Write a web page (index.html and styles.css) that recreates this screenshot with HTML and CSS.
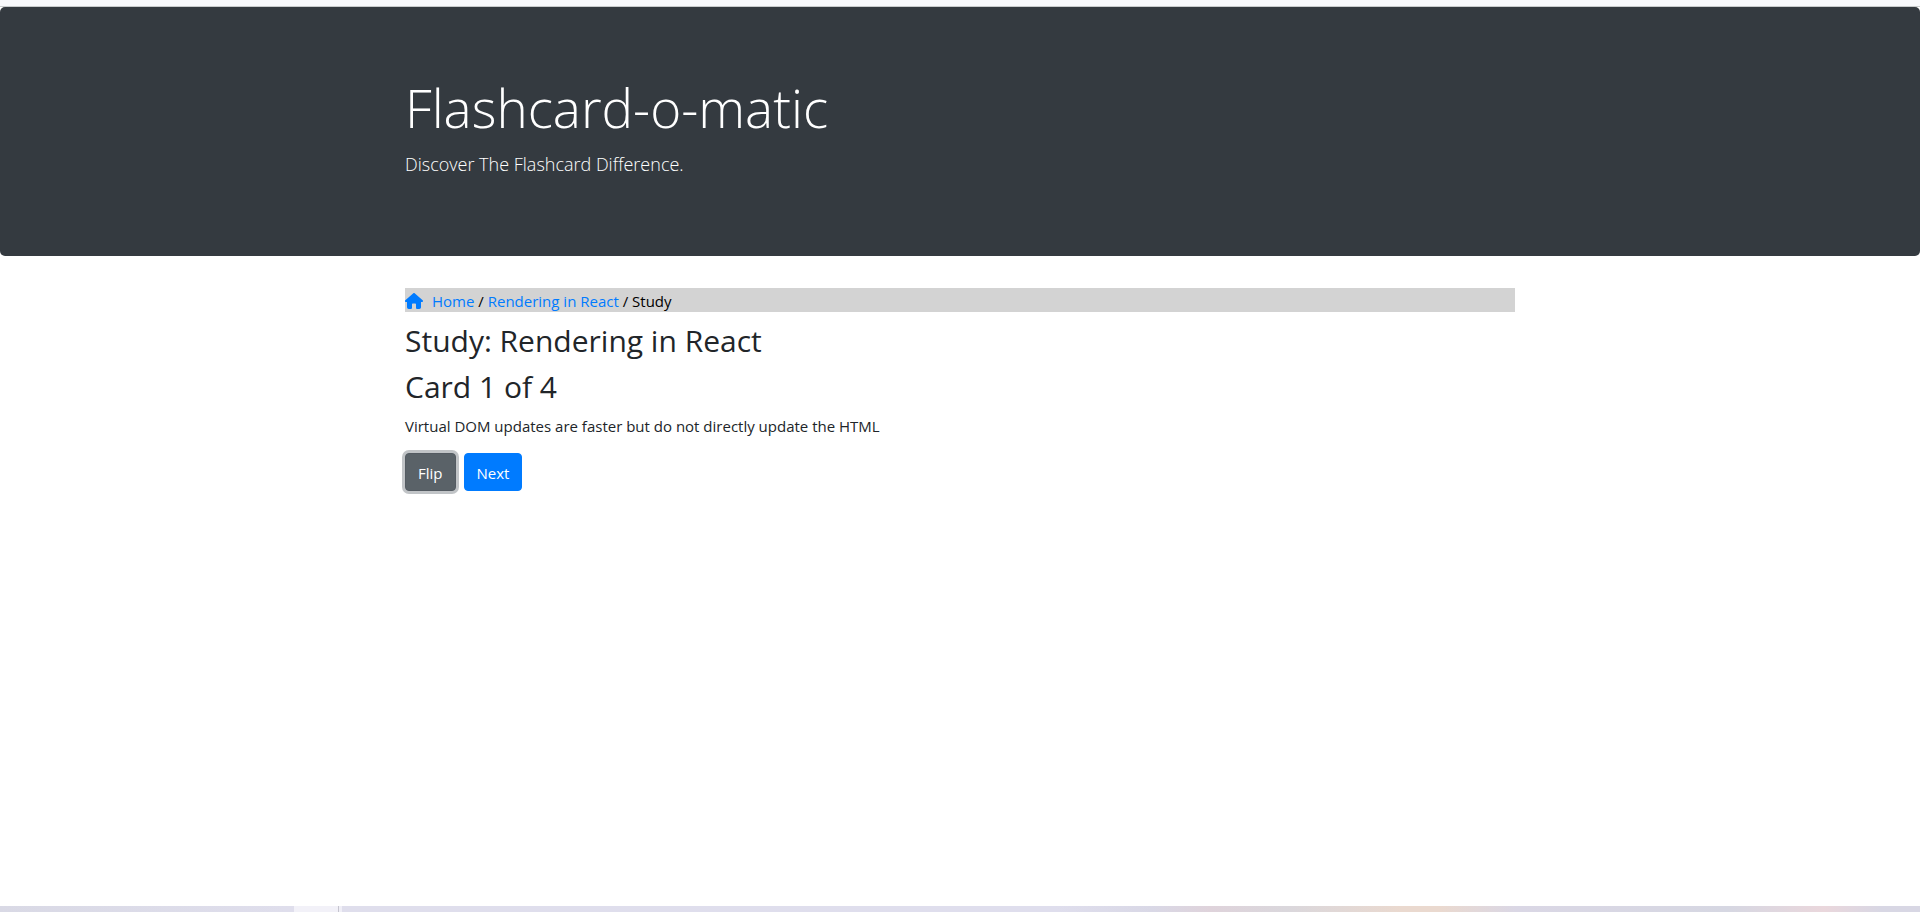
FILE: index.html
```html
<!DOCTYPE html>
<html lang="en">
<head>
<meta charset="utf-8">
<meta name="viewport" content="width=device-width, initial-scale=1">
<title>Flashcard-o-matic</title>
<link rel="stylesheet" href="styles.css">
</head>
<body>
<div class="top-strip"></div>
<header class="jumbotron">
  <div class="container">
    <h1 class="brand">Flashcard-o-matic</h1>
    <p class="lead">Discover The Flashcard Difference.</p>
  </div>
</header>
<main class="container content">
  <nav class="breadcrumb" aria-label="Breadcrumb">
    <svg class="home-icon" viewBox="0 0 576 512" aria-hidden="true"><path d="M575.8 255.5c0 18-15 32.100-32 32.100h-32l.7 160.200c0 35.300-21.500 64.200-56.500 64.200H392c-22 0-40-17.900-40-40V360c0-17.700-14.300-24-32-24h-64c-17.700 0-32 6.300-32 24v112c0 22.100-18 40-40 40h-64c-35 0-56-28.700-56-64V287.600H32c-18 0-32-14-32-32.100 0-9 3-17 10-24L266.400 8c7-7 15-8 22-8s15 2 21 7l255.400 224.500c8 7 12 15 11 24z"/></svg>
    <span class="trail"><a href="#home">Home</a> / <a href="#deck">Rendering in React</a> / <span aria-current="page">Study</span></span>
  </nav>
  <h2>Study: Rendering in React</h2>
  <h2>Card 1 of 4</h2>
  <p class="card-text">Virtual DOM updates are faster but do not directly update the HTML</p>
  <div class="actions">
    <button type="button" class="btn btn-flip">Flip</button>
    <button type="button" class="btn btn-next">Next</button>
  </div>
</main>
<div class="taskbar"><span class="taskbar-tab"></span></div>
</body>
</html>
```
FILE: styles.css
```css
* {
  box-sizing: border-box;
}

body {
  display: flex;
  flex-direction: column;
  min-height: 100vh;
  margin: 0;
  background: #fff;
  color: #212529;
  font-family: "Open Sans", "Noto Sans", sans-serif;
  font-size: 15px;
  line-height: 24px;
}

.top-strip {
  height: 7px;
  background: #f8f9fc;
  border-bottom: 1px solid #c8cbcc;
}

.jumbotron {
  padding: 67px 0 61px;
  border-radius: 5px;
  background: #343a40;
  color: #fff;
}

.container {
  width: 100%;
  max-width: 1140px;
  margin: 0 auto;
  padding: 0 15px;
}

.brand {
  margin: 0 0 8px;
  font-size: 53px;
  font-weight: 300;
  line-height: 67px;
}

.lead {
  margin: 0 0 16px;
  font-size: 18px;
  font-weight: 300;
  line-height: 30px;
}

.content {
  flex: 1;
  padding-top: 32px;
}

.breadcrumb {
  display: flex;
  align-items: center;
  gap: 9px;
  margin-bottom: 10px;
  padding-top: 2px;
  background: #d3d3d3;
  color: #000;
  line-height: 22px;
}

.breadcrumb a {
  color: #007bff;
  text-decoration: none;
}

.home-icon {
  width: 18px;
  height: 16px;
  fill: #007bff;
}

h2 {
  margin: 0 0 8px;
  font-size: 30px;
  font-weight: 400;
  line-height: 38px;
}

.card-text {
  margin: 0 0 15px;
}

.actions {
  display: flex;
  gap: 8px;
}

.btn {
  padding: 7px 12px 5px;
  border: 1px solid;
  border-radius: 4px;
  color: #fff;
  font: inherit;
}

.btn-flip {
  background: #5a6268;
  border-color: #545b62;
  box-shadow: 0 0 0 3px #c1c4c7;
}

.btn-next {
  background: #007bff;
  border-color: #007bff;
}

.taskbar {
  height: 6px;
  padding-left: 294px;
  background: linear-gradient(90deg, #d9d9e5 0%, #dfdeec 15%, #dfdeed 55%, #d9d8e6 60%, #dfd3db 63%, #dad7dc 67%, #ead9cf 73%, #ead9cf 75%, #dad7e5 79%, #d6d7e2 90%, #ead7dc 95%, #d8d7e4 98%);
}

.taskbar-tab {
  display: block;
  width: 48px;
  height: 6px;
  background: linear-gradient(90deg, #f2f1f8 44px, #c5c4ce 44px, #c5c4ce 45px, #f0eff7 45px);
}
```
